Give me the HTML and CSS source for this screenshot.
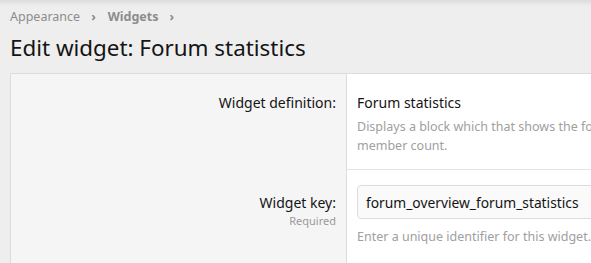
FILE: index.html
```html
<!DOCTYPE html>
<html lang="en">
<head>
    <meta charset="UTF-8">
    <title>Edit widget: Forum statistics</title>
    <link rel="stylesheet" href="styles.css">
</head>
<body>
    <div class="page">
        <ul class="crumbs">
            <li><a href="#">Appearance</a></li>
            <li><a href="#" class="strong">Widgets</a></li>
        </ul>
        <h1 class="title">Edit widget: Forum statistics</h1>

        <div class="block">
            <dl class="row">
                <dt>
                    <div class="label">Widget definition:</div>
                </dt>
                <dd>
                    <div class="value">Forum statistics</div>
                    <div class="explain">Displays a block which that shows the forum statistics, such as thread count, post count and member count.</div>
                </dd>
            </dl>
            <dl class="row">
                <dt>
                    <div class="label">Widget key:</div>
                    <div class="hint">Required</div>
                </dt>
                <dd>
                    <input class="input" type="text" value="forum_overview_forum_statistics">
                    <div class="explain">Enter a unique identifier for this widget.</div>
                </dd>
            </dl>
        </div>
    </div>
</body>
</html>
```

FILE: styles.css
```css
body {
    margin: 0;
    background: #eeeeee;
    font-family: "Noto Sans", "Open Sans", sans-serif;
    color: #141414;
    overflow: hidden;
}
.page {
    padding: 6px 0 0 10px;
    background: linear-gradient(#dcdcdc, #eeeeee 6px);
}
.crumbs {
    list-style: none;
    margin: 0;
    padding: 0;
    display: flex;
    font-size: 12.5px;
    line-height: 22px;
}
.crumbs li::after {
    content: "\203A";
    margin: 0 12px 0 11px;
    color: #8c8c8c;
    font-weight: bold;
}
.crumbs a {
    color: #8c8c8c;
    text-decoration: none;
}
.crumbs a.strong {
    font-weight: bold;
}
.title {
    margin: 6px 0 11px;
    font-size: 22.4px;
    font-weight: normal;
    line-height: 28px;
}
.block {
    border: 1px solid #dcdcdc;
    border-right: none;
    background: #ffffff;
    width: 1000px;
}
.row {
    display: flex;
    margin: 0;
}
.row + .row dd {
    border-top: 1px solid #e4e4e4;
}
.row dt {
    flex: 0 0 336px;
    box-sizing: border-box;
    background: #f5f5f5;
    border-right: 1px solid #dcdcdc;
    text-align: right;
    padding: 19px 10px 0 0;
}
.row + .row dt {
    padding-top: 24px;
}
.row dd {
    flex: 1;
    margin: 0;
    padding: 19px 10px 14px 10px;
}
.row + .row dd {
    padding-top: 15px;
    padding-bottom: 20px;
}
.label {
    font-size: 14px;
    line-height: 20px;
}
.hint {
    font-size: 11px;
    color: #9a9a9a;
    line-height: 16px;
}
.value {
    font-size: 14px;
    line-height: 20px;
    margin-bottom: 4px;
}
.explain {
    font-size: 12.5px;
    color: #a0a0a0;
    line-height: 19px;
    width: 560px;
}
.input {
    display: block;
    box-sizing: border-box;
    width: 400px;
    height: 34px;
    padding: 0 8px;
    font-family: inherit;
    font-size: 13.8px;
    color: #141414;
    background: #fafafa;
    border: 1px solid #dcdcdc;
    border-radius: 4px;
    margin: 0 0 8px;
}
```
